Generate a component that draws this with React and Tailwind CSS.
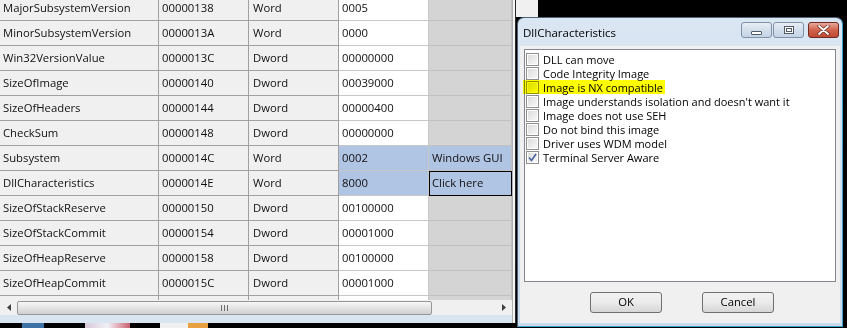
import React from 'react';

const rows = [
  ['MajorSubsystemVersion', '00000138', 'Word', '0005', ''],
  ['MinorSubsystemVersion', '0000013A', 'Word', '0000', ''],
  ['Win32VersionValue', '0000013C', 'Dword', '00000000', ''],
  ['SizeOfImage', '00000140', 'Dword', '00039000', ''],
  ['SizeOfHeaders', '00000144', 'Dword', '00000400', ''],
  ['CheckSum', '00000148', 'Dword', '00000000', ''],
  ['Subsystem', '0000014C', 'Word', '0002', 'Windows GUI'],
  ['DllCharacteristics', '0000014E', 'Word', '8000', 'Click here'],
  ['SizeOfStackReserve', '00000150', 'Dword', '00100000', ''],
  ['SizeOfStackCommit', '00000154', 'Dword', '00001000', ''],
  ['SizeOfHeapReserve', '00000158', 'Dword', '00100000', ''],
  ['SizeOfHeapCommit', '0000015C', 'Dword', '00001000', ''],
  ['', '', '', '', ''],
];

const flags = [
  ['DLL can move', false],
  ['Code Integrity Image', false],
  ['Image is NX compatible', false],
  ["Image understands isolation and doesn't want it", false],
  ['Image does not use SEH', false],
  ['Do not bind this image', false],
  ['Driver uses WDM model', false],
  ['Terminal Server Aware', true],
];

function GridRow({ row, index }) {
  const selected = index === 6 || index === 7;
  const focused = index === 7;
  return (
    <div className="flex h-[25px] shrink-0">
      <div className="w-[159px] flex items-center pl-[3px] bg-[#f0f0f0] border-b border-r border-[#a0a0a0]">
        {row[0]}
      </div>
      <div className="w-[90px] flex items-center pl-[3px] bg-[#f0f0f0] border-b border-r border-[#a0a0a0]">
        {row[1]}
      </div>
      <div className="w-[90px] flex items-center pl-[4px] bg-[#f0f0f0] border-b border-r border-[#a0a0a0]">
        {row[2]}
      </div>
      <div
        className={`w-[90px] flex items-center pl-[3px] border-b border-r border-[#c8c8c8] ${
          selected ? 'bg-[#b0c4e4]' : 'bg-white'
        }`}
      >
        {row[3]}
      </div>
      <div
        className={`w-[83px] flex items-center pl-[3px] border-b border-r border-[#c0c0c0] ${
          selected ? 'bg-[#b0c4e4]' : 'bg-[#d4d4d4]'
        } ${focused ? 'outline outline-1 outline-black -outline-offset-1' : ''}`}
      >
        {row[4]}
      </div>
    </div>
  );
}

function Checkbox({ checked }) {
  return (
    <div className="w-[13px] h-[13px] border border-[#8f8f8f] bg-white p-[1px] shrink-0">
      <div className="w-full h-full bg-gradient-to-br from-[#dcdcdc] to-[#f8f8f8] flex items-center justify-center">
        {checked && (
          <svg width="9" height="9" viewBox="0 0 9 9">
            <path d="M1 4.5 L3.5 7.5 L8 1" fill="none" stroke="#4c61a0" strokeWidth="1.6" />
          </svg>
        )}
      </div>
    </div>
  );
}

function TitleButton({ kind }) {
  if (kind === 'close') {
    return (
      <div className="w-[31px] h-[16px] rounded-[3px] border border-[#6e2a22] bg-gradient-to-b from-[#e9a99c] via-[#d0624c] to-[#c04a34] flex items-center justify-center">
        <svg width="13" height="10" viewBox="0 0 13 10">
          <path d="M2 1 L11 9 M11 1 L2 9" stroke="#5a2a22" strokeWidth="3.2" strokeLinecap="round" />
          <path d="M2 1 L11 9 M11 1 L2 9" stroke="#ffffff" strokeWidth="1.8" strokeLinecap="round" />
        </svg>
      </div>
    );
  }
  return (
    <div className="w-[31px] h-[16px] rounded-[3px] border border-[#8192a8] bg-gradient-to-b from-[#e8eef5] via-[#d3dfec] to-[#c4d3e4] flex items-center justify-center">
      {kind === 'min' ? (
        <div className="w-[11px] h-[4px] mt-[5px] border border-[#505a66] bg-white rounded-[1px]" />
      ) : (
        <div className="w-[10px] h-[8px] border border-[#505a66] bg-white p-[1px]">
          <div className="w-full h-full border border-[#505a66]" />
        </div>
      )}
    </div>
  );
}

function WinButton({ children }) {
  return (
    <div className="w-[72px] h-[21px] rounded-[3px] border border-[#707070] bg-gradient-to-b from-[#f2f2f2] via-[#ebebeb] to-[#d6d6d6] flex items-center justify-center text-black">
      {children}
    </div>
  );
}

export default function App() {
  return (
    <div
      className="relative w-[847px] h-[328px] overflow-hidden bg-black text-[11.3px] text-[#111]"
      style={{ fontFamily: '"Open Sans", "Noto Sans", sans-serif' }}
    >
      <div className="flex h-full">
        {/* main window */}
        <div className="w-[516px] flex flex-col shrink-0">
          <div className="flex h-[323px]">
            <div className="w-[512px] flex flex-col bg-[#f0f0f0]">
              <div className="h-[300px] overflow-hidden flex flex-col">
                <div className="-mt-[4px] flex flex-col">
                  {rows.map((row, i) => (
                    <GridRow key={i} row={row} index={i} />
                  ))}
                </div>
              </div>
              {/* horizontal scrollbar */}
              <div className="h-[15px] flex items-center bg-[#f0f0f0]">
                <div className="w-[17px] flex justify-center">
                  <svg width="4" height="7" viewBox="0 0 4 7">
                    <path d="M4 0 L0 3.5 L4 7 Z" fill="#404040" />
                  </svg>
                </div>
                <div className="w-[415px] h-[14px] rounded-[2px] border border-[#979797] bg-gradient-to-b from-[#f6f6f6] via-[#e4e4e4] to-[#d0d0d0] flex items-center justify-center">
                  <svg width="7" height="6" viewBox="0 0 7 6">
                    <path d="M0.5 0 V6 M3.5 0 V6 M6.5 0 V6" stroke="#6a6a6a" strokeWidth="1" />
                  </svg>
                </div>
                <div className="flex-1 flex justify-end pr-[6px]">
                  <svg width="4" height="7" viewBox="0 0 4 7">
                    <path d="M0 0 L4 3.5 L0 7 Z" fill="#404040" />
                  </svg>
                </div>
              </div>
              <div className="flex-1 bg-[#d9e5f1]" />
            </div>
            <div className="w-[3px] bg-[#f4f4f4] border-l border-[#b0b0b0]" />
            <div className="w-[1px] bg-[#2a2a2a]" />
          </div>
          {/* taskbar edge */}
          <div className="flex-1 flex bg-black">
            <div className="w-[22px]" />
            <div className="w-[22px] bg-[#3e73a8]" />
            <div className="w-[41px]" />
            <div className="w-[45px] bg-gradient-to-r from-[#d8c8d8] via-[#f0f0f8] to-[#c86070]" />
            <div className="w-[30px]" />
            <div className="w-[28px] bg-[#f0f0f0]" />
            <div className="w-[20px] bg-[#e8a040]" />
          </div>
        </div>
        <div className="w-[22px] h-[17px] bg-[#f0f0f0]" />
      </div>

      {/* dialog window */}
      <div className="absolute left-[517px] top-[17px] w-[326px] h-[310px] rounded-t-[7px] border border-[#4f6378] border-r-[#3aa0d2] border-b-[#3aa0d2] bg-gradient-to-b from-[#dbe6f3] to-[#cbdaea] flex flex-col">
        <div className="h-[28px] flex items-center pl-[5px] pr-[3px] shrink-0">
          <div className="flex-1 text-[11.5px] text-black pt-[2px]">DllCharacteristics</div>
          <div className="flex gap-[1px] -mt-[4px]">
            <TitleButton kind="min" />
            <TitleButton kind="max" />
            <div className="w-[2px]" />
            <TitleButton kind="close" />
          </div>
        </div>
        <div className="flex-1 mx-[2px] mb-[3px] bg-[#f0f0f0] flex flex-col px-[4px] pt-[3px]">
          <div className="h-[233px] border border-[#828790] bg-white pt-[2px] pl-[1px] flex flex-col items-start text-black text-[11px]">
            {flags.map(([label, checked], i) => (
              <div key={i} className="relative h-[14px] flex items-center gap-[4px]">
                <Checkbox checked={checked} />
                <span className="leading-none">{label}</span>
                {i === 2 && (
                  <div className="absolute -left-[3px] -right-[2px] top-0 h-[14px] bg-[#ffff00] mix-blend-multiply" />
                )}
              </div>
            ))}
          </div>
          <div className="flex-1 flex items-center justify-center gap-[40px] pl-[4px]">
            <WinButton>OK</WinButton>
            <WinButton>Cancel</WinButton>
          </div>
        </div>
      </div>
    </div>
  );
}
